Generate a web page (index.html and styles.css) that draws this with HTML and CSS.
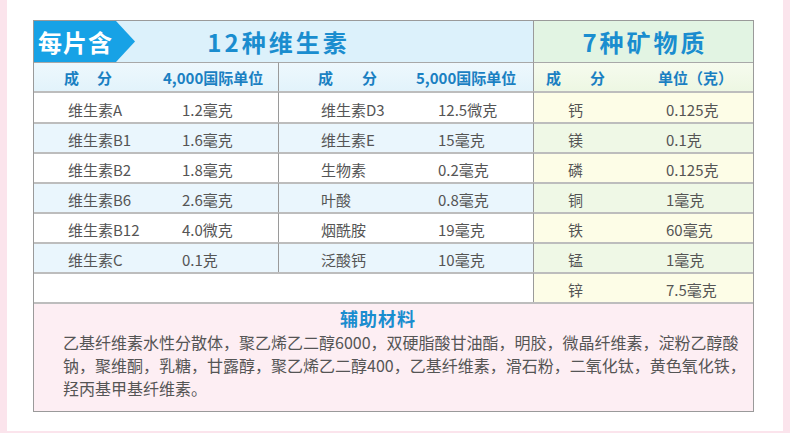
FILE: index.html
```html
<!DOCTYPE html>
<html lang="zh-CN">
<head>
<meta charset="utf-8">
<title>每片含</title>
<link rel="stylesheet" href="styles.css">
</head>
<body>
<div class="frame">
  <div class="tbl">
    <div class="row head">
      <div class="hvit">
        <div class="badge">每片含</div>
        <div class="title">12种维生素</div>
      </div>
      <div class="hmin"><div class="title min-title">7种矿物质</div></div>
    </div>
    <div class="row colhdr">
      <div class="c v c1"><span class="w">成</span><span class="w g1">分</span></div>
      <div class="c v c2 div">4,000国际单位</div>
      <div class="c v c3"><span class="w">成</span><span class="w g2">分</span></div>
      <div class="c v c4 div">5,000国际单位</div>
      <div class="c m c5"><span class="w">成</span><span class="w g2">分</span></div>
      <div class="c m c6">单位（克）</div>
    </div>
    <div class="row odd first">
      <div class="c v c1">维生素A</div><div class="c v c2 div">1.2毫克</div>
      <div class="c v c3">维生素D3</div><div class="c v c4 div">12.5微克</div>
      <div class="c m c5">钙</div><div class="c m c6">0.125克</div>
    </div>
    <div class="row even">
      <div class="c v c1">维生素B1</div><div class="c v c2 div">1.6毫克</div>
      <div class="c v c3">维生素E</div><div class="c v c4 div">15毫克</div>
      <div class="c m c5">镁</div><div class="c m c6">0.1克</div>
    </div>
    <div class="row odd">
      <div class="c v c1">维生素B2</div><div class="c v c2 div">1.8毫克</div>
      <div class="c v c3">生物素</div><div class="c v c4 div">0.2毫克</div>
      <div class="c m c5">磷</div><div class="c m c6">0.125克</div>
    </div>
    <div class="row even">
      <div class="c v c1">维生素B6</div><div class="c v c2 div">2.6毫克</div>
      <div class="c v c3">叶酸</div><div class="c v c4 div">0.8毫克</div>
      <div class="c m c5">铜</div><div class="c m c6">1毫克</div>
    </div>
    <div class="row odd">
      <div class="c v c1">维生素B12</div><div class="c v c2 div">4.0微克</div>
      <div class="c v c3">烟酰胺</div><div class="c v c4 div">19毫克</div>
      <div class="c m c5">铁</div><div class="c m c6">60毫克</div>
    </div>
    <div class="row even">
      <div class="c v c1">维生素C</div><div class="c v c2 div">0.1克</div>
      <div class="c v c3">泛酸钙</div><div class="c v c4 div">10毫克</div>
      <div class="c m c5">锰</div><div class="c m c6">1毫克</div>
    </div>
    <div class="row odd">
      <div class="c v blank div"></div>
      <div class="c m c5">锌</div><div class="c m c6">7.5毫克</div>
    </div>
    <div class="aux">
      <div class="aux-title">辅助材料</div>
      <p class="aux-text">乙基纤维素水性分散体，聚乙烯乙二醇6000，双硬脂酸甘油酯，明胶，微晶纤维素，淀粉乙醇酸<br>钠，聚维酮，乳糖，甘露醇，聚乙烯乙二醇400，乙基纤维素，滑石粉，二氧化钛，黄色氧化铁，<br>羟丙基甲基纤维素。</p>
    </div>
  </div>
</div>
</body>
</html>
```

FILE: styles.css
```css
* { box-sizing: border-box; }
html, body { margin: 0; padding: 0; background: #fff; }
body { font-family: "Noto Sans CJK SC", "Microsoft YaHei", sans-serif; color: #555; }

.frame {
  width: 790px;
  height: 433px;
  border-left: 7px solid #fbe4ec;
  border-right: 7px solid #fbe4ec;
  border-bottom: 2px solid #fbe4ec;
  padding: 20px 0 0 26px;
  background: #fff;
}

.tbl {
  width: 721px;
  border: 1px solid #9a9a9a;
  display: grid;
  grid-template-columns: 126px 119px 131px 124px 116px 103px;
  grid-template-rows: 41px 29px 31px 30px 30px 30px 30px 30px 30px 109px;
}

.row { display: contents; }

.hvit {
  grid-column: span 4;
  position: relative;
  background: #dcf1fb;
  border-right: 1px solid #9a9a9a;
  display: flex;
  align-items: center;
  justify-content: center;
  padding-right: 10px;
}
.hmin {
  grid-column: span 2;
  background: #e2f4e3;
  display: flex;
  align-items: center;
  justify-content: center;
}
.badge {
  position: absolute;
  left: 0;
  top: 0;
  width: 101px;
  height: 41px;
  background: #17a2e6;
  clip-path: polygon(0 0, 82px 0, 101px 50%, 82px 100%, 0 100%);
  color: #fff;
  font-size: 24px;
  font-weight: 700;
  letter-spacing: 1px;
  line-height: 41px;
  padding-left: 4px;
}
.title {
  color: #1a8dcf;
  font-size: 24px;
  font-weight: 700;
  letter-spacing: 3px;
  line-height: 41px;
}
.min-title { padding-left: 3px; }

.c {
  border-top: 2px solid #bdbdbd;
  font-size: 15px;
  line-height: 28px;
  padding-top: 2px;
  white-space: nowrap;
  color: #555;
}
.first .c { line-height: 29px; }
.div { border-right: 1px solid #9a9a9a; }

.colhdr .c {
  border-top: 1px solid #a8a8a8;
  color: #1a80c2;
  font-weight: 700;
  line-height: 27px;
  padding-top: 1px;
  font-size: 15px;
}
.colhdr .v { background: linear-gradient(#eef8fd, #e2f3fb); }
.colhdr .m { background: linear-gradient(#f6fbee, #edf7e3); }
.colhdr .c1 { padding-left: 30px; }
.colhdr .c2 { padding-left: 3px; }
.colhdr .c3 { padding-left: 39px; }
.colhdr .c4 { padding-left: 6px; }
.colhdr .c5 { padding-left: 12px; }
.colhdr .c6 { padding-left: 8px; }
.w { display: inline-block; }
.g1 { margin-left: 18px; }
.g2 { margin-left: 29px; }

.c1 { padding-left: 34px; }
.c2 { padding-left: 22px; }
.c3 { padding-left: 42px; }
.c4 { padding-left: 28px; }
.c5 { padding-left: 34px; }
.c6 { padding-left: 16px; }

.odd .v { background: #fff; }
.even .v { background: #eaf6fd; }
.odd .m { background: #fdfde7; }
.even .m { background: #eff8e6; }

.blank { grid-column: span 4; }

.aux {
  grid-column: span 6;
  border-top: 2px solid #bdbdbd;
  background: #fdeef3;
  padding: 3px 0 0 29px;
}
.aux-title {
  color: #1a8dcf;
  font-size: 18px;
  font-weight: 700;
  letter-spacing: 1px;
  line-height: 22px;
  padding-left: 277px;
}
.aux-text {
  margin: 2px 0 0;
  font-size: 16px;
  line-height: 23px;
  color: #555;
  white-space: nowrap;
}
```
